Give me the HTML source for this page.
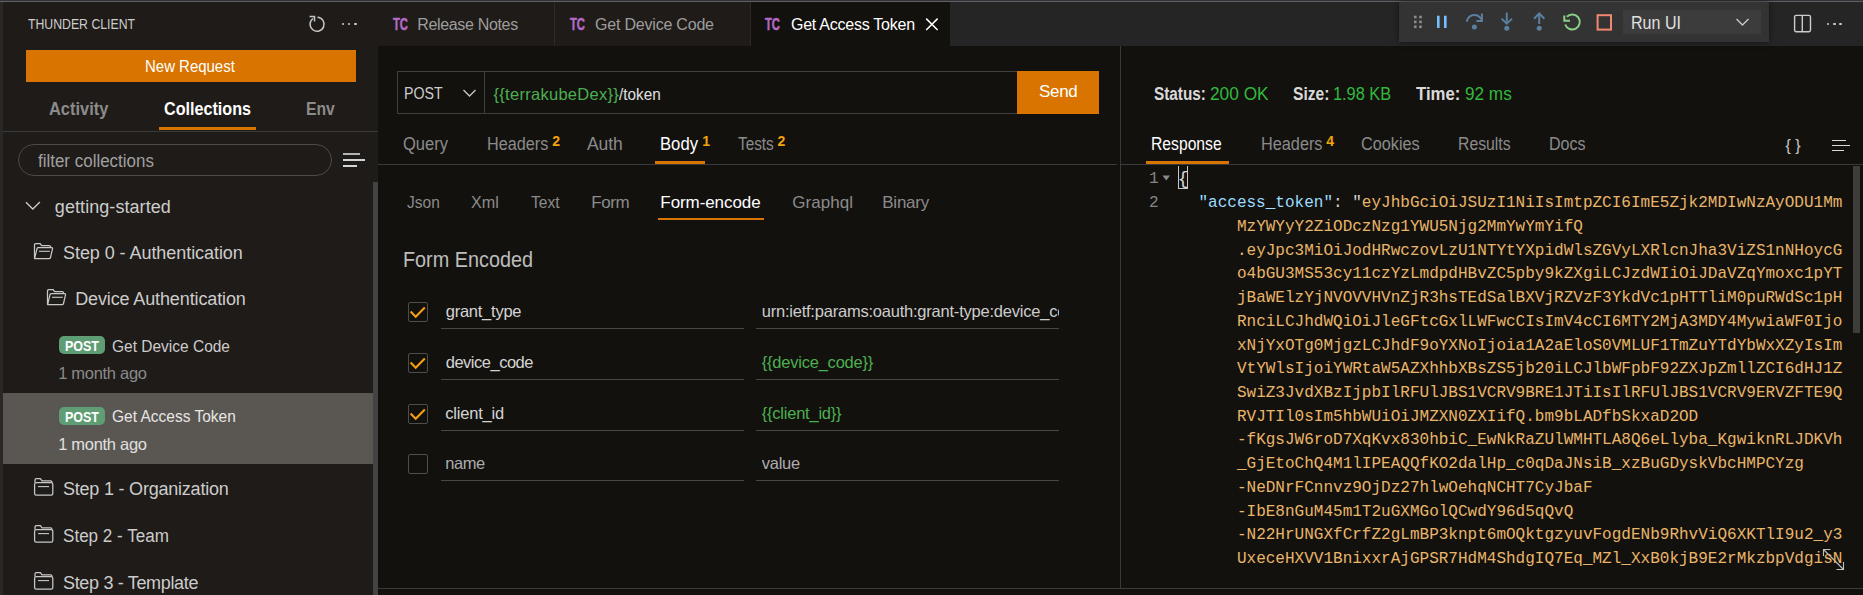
<!DOCTYPE html>
<html><head><meta charset="utf-8">
<style>
*{margin:0;padding:0;box-sizing:border-box}
html,body{width:1863px;height:595px;overflow:hidden;background:#13110e;font-family:"Liberation Sans",sans-serif}
.a{position:absolute;white-space:pre;line-height:1}
</style></head><body>
<div style="position:absolute;left:0px;top:0px;width:1863px;height:595px;background:#13110e;"></div>
<div style="position:absolute;left:0px;top:2px;width:378px;height:593px;background:#1f1b18;"></div>
<div style="position:absolute;left:0px;top:2px;width:3px;height:593px;background:#2a2727;"></div>
<div style="position:absolute;left:378px;top:2px;width:572px;height:44px;background:#1f1b18;"></div>
<div style="position:absolute;left:950px;top:2px;width:913px;height:44px;background:#252526;"></div>
<div style="position:absolute;left:751px;top:2px;width:199px;height:44px;background:#13110e;"></div>
<div style="position:absolute;left:554px;top:2px;width:1px;height:44px;background:#2d2a27;"></div>
<div style="position:absolute;left:750px;top:2px;width:1px;height:44px;background:#2d2a27;"></div>
<div style="position:absolute;left:0px;top:0px;width:1863px;height:1px;background:#303236;"></div>
<div style="position:absolute;left:0px;top:1px;width:1863px;height:1px;background:#606064;"></div>
<div style="position:absolute;left:26px;top:50px;width:330px;height:32px;background:#d97400;"></div>
<div style="position:absolute;left:159px;top:127px;width:97px;height:3px;background:#d97400;"></div>
<div style="position:absolute;left:3px;top:131px;width:375px;height:1px;background:#3a3a3a;"></div>
<div style="position:absolute;left:18px;top:144px;width:314px;height:32px;background:transparent;border:1px solid #4a4a4a;border-radius:16px;"></div>
<div style="position:absolute;left:343.3px;top:153.2px;width:17px;height:1.8px;background:#b4b4b4;"></div>
<div style="position:absolute;left:343.3px;top:159px;width:21.6px;height:1.8px;background:#d4d4d4;"></div>
<div style="position:absolute;left:343.3px;top:164.8px;width:14px;height:1.8px;background:#d4d4d4;"></div>
<div style="position:absolute;left:373px;top:182px;width:5px;height:413px;background:#434343;"></div>
<div style="position:absolute;left:59px;top:336px;width:46px;height:18px;background:#5f9e74;border-radius:5px;"></div>
<div style="position:absolute;left:3px;top:393px;width:370px;height:71px;background:#5a5651;"></div>
<div style="position:absolute;left:59px;top:407px;width:46px;height:18px;background:#5f9e74;border-radius:5px;"></div>
<div style="position:absolute;left:1399px;top:2px;width:370px;height:40px;background:#333333;box-shadow:0 0 6px rgba(0,0,0,.5);"></div>
<div style="position:absolute;left:1623px;top:10px;width:138px;height:24px;background:#3c3c3c;"></div>
<div style="position:absolute;left:1826.8px;top:22.7px;width:2.6px;height:2.6px;background:#cccccc;border-radius:50%;"></div>
<div style="position:absolute;left:1833.0px;top:22.7px;width:2.6px;height:2.6px;background:#cccccc;border-radius:50%;"></div>
<div style="position:absolute;left:1839.3px;top:22.7px;width:2.6px;height:2.6px;background:#cccccc;border-radius:50%;"></div>
<div style="position:absolute;left:341.8px;top:22.7px;width:2.6px;height:2.6px;background:#cccccc;border-radius:50%;"></div>
<div style="position:absolute;left:347.9px;top:22.7px;width:2.6px;height:2.6px;background:#cccccc;border-radius:50%;"></div>
<div style="position:absolute;left:354.2px;top:22.7px;width:2.6px;height:2.6px;background:#cccccc;border-radius:50%;"></div>
<div style="position:absolute;left:397px;top:71px;width:620px;height:43px;background:transparent;border:1px solid #3f3f3f;border-right:none;"></div>
<div style="position:absolute;left:484px;top:71px;width:1px;height:43px;background:#3f3f3f;"></div>
<div style="position:absolute;left:1017px;top:71px;width:82px;height:43px;background:#d97400;"></div>
<div style="position:absolute;left:1120px;top:46px;width:1px;height:542px;background:#3a3a3a;"></div>
<div style="position:absolute;left:655px;top:161px;width:50px;height:3px;background:#d97400;"></div>
<div style="position:absolute;left:378px;top:164px;width:739px;height:1px;background:#3a3a3a;"></div>
<div style="position:absolute;left:658px;top:218px;width:106px;height:1.5px;background:#d97400;"></div>
<div style="position:absolute;left:408px;top:302.0px;width:20px;height:20px;background:transparent;border:1px solid #4d4d4d;border-radius:2px;"></div>
<div style="position:absolute;left:441px;top:328px;width:303px;height:1px;background:#484848;"></div>
<div style="position:absolute;left:756px;top:328px;width:303px;height:1px;background:#484848;"></div>
<div style="position:absolute;left:408px;top:352.8px;width:20px;height:20px;background:transparent;border:1px solid #4d4d4d;border-radius:2px;"></div>
<div style="position:absolute;left:441px;top:379px;width:303px;height:1px;background:#484848;"></div>
<div style="position:absolute;left:756px;top:379px;width:303px;height:1px;background:#484848;"></div>
<div style="position:absolute;left:408px;top:403.6px;width:20px;height:20px;background:transparent;border:1px solid #4d4d4d;border-radius:2px;"></div>
<div style="position:absolute;left:441px;top:430px;width:303px;height:1px;background:#484848;"></div>
<div style="position:absolute;left:756px;top:430px;width:303px;height:1px;background:#484848;"></div>
<div style="position:absolute;left:408px;top:454.4px;width:20px;height:20px;background:transparent;border:1px solid #4d4d4d;border-radius:2px;"></div>
<div style="position:absolute;left:441px;top:480px;width:303px;height:1px;background:#484848;"></div>
<div style="position:absolute;left:756px;top:480px;width:303px;height:1px;background:#484848;"></div>
<div style="position:absolute;left:1146px;top:161px;width:83px;height:3px;background:#d97400;"></div>
<div style="position:absolute;left:1121px;top:164px;width:742px;height:1px;background:#3a3a3a;"></div>
<div style="position:absolute;left:1832px;top:139.8px;width:14.2px;height:1.2px;background:#d8d8d8;"></div>
<div style="position:absolute;left:1832px;top:145px;width:18.2px;height:1.2px;background:#d8d8d8;"></div>
<div style="position:absolute;left:1832px;top:150px;width:12px;height:1.2px;background:#d8d8d8;"></div>
<div style="position:absolute;left:1178px;top:166px;width:9.5px;height:23px;background:transparent;border:1px solid #c8c8c8;border-top:none;"></div>
<div style="position:absolute;left:1853px;top:166px;width:7px;height:167px;background:#3e3d3b;"></div>
<div style="position:absolute;left:378px;top:588px;width:1485px;height:1px;background:#3a3a3a;"></div>
<svg style="position:absolute;left:25px;top:200px" width="17" height="12"><path d="M1 2.3 L7.8 9 L14.9 2" stroke="#cccccc" stroke-width="1.3" fill="none"/></svg>
<svg style="position:absolute;left:28px;top:238px" width="30" height="26" viewBox="0 0 30 26"><g stroke="#c8c8c8" stroke-width="1.25" fill="none" stroke-linejoin="round"><path d="M6.5 20.5 V6.7 Q6.5 5.5 7.7 5.5 H12 L13.6 7.6 H21.3 Q22.5 7.6 22.5 8.8 V9.6"/><path d="M6.6 20.6 L9 10.6 Q9.3 9.6 10.3 9.6 H23.6 Q24.8 9.6 24.5 10.8 L22.5 19.5 Q22.2 20.7 21 20.7 Z"/><path d="M11 13.3 H21.8" stroke-width="1.1"/></g></svg>
<svg style="position:absolute;left:41px;top:284px" width="30" height="26" viewBox="0 0 30 26"><g stroke="#c8c8c8" stroke-width="1.25" fill="none" stroke-linejoin="round"><path d="M6.5 20.5 V6.7 Q6.5 5.5 7.7 5.5 H12 L13.6 7.6 H21.3 Q22.5 7.6 22.5 8.8 V9.6"/><path d="M6.6 20.6 L9 10.6 Q9.3 9.6 10.3 9.6 H23.6 Q24.8 9.6 24.5 10.8 L22.5 19.5 Q22.2 20.7 21 20.7 Z"/><path d="M11 13.3 H21.8" stroke-width="1.1"/></g></svg>
<svg style="position:absolute;left:28px;top:472px" width="30" height="28" viewBox="0 0 30 28"><g stroke="#c8c8c8" stroke-width="1.25" fill="none" stroke-linejoin="round"><path d="M7 10.5 V7.9 Q7 6.6 8.3 6.6 H12.4 L14 8.9 H22.6 Q23.9 8.9 24.1 10.5"/><rect x="6.6" y="10.6" width="18.2" height="12.4" rx="1.6"/><path d="M10 14.6 H21" stroke-width="1.1"/></g></svg>
<svg style="position:absolute;left:28px;top:519px" width="30" height="28" viewBox="0 0 30 28"><g stroke="#c8c8c8" stroke-width="1.25" fill="none" stroke-linejoin="round"><path d="M7 10.5 V7.9 Q7 6.6 8.3 6.6 H12.4 L14 8.9 H22.6 Q23.9 8.9 24.1 10.5"/><rect x="6.6" y="10.6" width="18.2" height="12.4" rx="1.6"/><path d="M10 14.6 H21" stroke-width="1.1"/></g></svg>
<svg style="position:absolute;left:28px;top:566px" width="30" height="28" viewBox="0 0 30 28"><g stroke="#c8c8c8" stroke-width="1.25" fill="none" stroke-linejoin="round"><path d="M7 10.5 V7.9 Q7 6.6 8.3 6.6 H12.4 L14 8.9 H22.6 Q23.9 8.9 24.1 10.5"/><rect x="6.6" y="10.6" width="18.2" height="12.4" rx="1.6"/><path d="M10 14.6 H21" stroke-width="1.1"/></g></svg>
<span class="a" style="left:392.50px;top:16.45px;font:700 16px 'Liberation Sans',sans-serif;color:#b46ac8;transform:scaleX(0.70);transform-origin:0 0;-webkit-text-stroke:0.5px #b46ac8">TC</span>
<span class="a" style="left:569.50px;top:16.45px;font:700 16px 'Liberation Sans',sans-serif;color:#b46ac8;transform:scaleX(0.70);transform-origin:0 0;-webkit-text-stroke:0.5px #b46ac8">TC</span>
<span class="a" style="left:764.50px;top:16.45px;font:700 16px 'Liberation Sans',sans-serif;color:#b46ac8;transform:scaleX(0.70);transform-origin:0 0;-webkit-text-stroke:0.5px #b46ac8">TC</span>
<svg style="position:absolute;left:925px;top:18px" width="15" height="14"><path d="M1.2 0.6 L12.6 12 M12.6 0.6 L1.2 12" stroke="#ffffff" stroke-width="1.5"/></svg>
<svg style="position:absolute;left:1410px;top:8px" width="40" height="28" viewBox="0 0 40 28">
<g fill="#8c8c8c"><rect x="4" y="7.7" width="2.6" height="2.6"/><rect x="9.2" y="7.7" width="2.6" height="2.6"/><rect x="4" y="12.6" width="2.6" height="2.6"/><rect x="9.2" y="12.6" width="2.6" height="2.6"/><rect x="4" y="17.5" width="2.6" height="2.6"/><rect x="9.2" y="17.5" width="2.6" height="2.6"/></g>
<g fill="#75beff"><rect x="27" y="7.7" width="2.6" height="12.3"/><rect x="34" y="7.7" width="2.6" height="12.3"/></g>
</svg>
<svg style="position:absolute;left:1460px;top:8px" width="160" height="28" viewBox="0 0 160 28">
<g stroke="#5b7fa0" stroke-width="2" fill="none"><path d="M6.6 13.6 Q8.6 6.9 14.3 6.9 Q19 6.9 21.6 11.6"/><path d="M21.9 5.6 V12.9 H16.4"/></g><circle cx="14.4" cy="19.1" r="2.5" fill="#5b7fa0"/>
<g stroke="#5b7fa0" stroke-width="2" fill="none"><path d="M46.8 4.6 V15.2"/><path d="M41.6 10.6 L46.8 15.6 L52 10.6"/></g><circle cx="46.8" cy="20.2" r="2.5" fill="#5b7fa0"/>
<g stroke="#5b7fa0" stroke-width="2" fill="none"><path d="M79.2 5.6 V16"/><path d="M74 10.7 L79.2 5.5 L84.4 10.7"/></g><circle cx="79.2" cy="20.2" r="2.5" fill="#5b7fa0"/>
<g stroke="#89d185" stroke-width="2" fill="none"><path d="M106.9 8.7 A7.5 7.5 0 1 1 105.2 16.5"/><path d="M104.3 7.4 V12.7 H110"/></g>
<rect x="137.6" y="7.2" width="13.4" height="14.4" stroke="#f48771" stroke-width="2" fill="none"/>
</svg>
<svg style="position:absolute;left:1735px;top:17px" width="16" height="11"><path d="M1.5 2 L7.5 8 L13.5 2" stroke="#c8c8c8" stroke-width="1.4" fill="none"/></svg>
<svg style="position:absolute;left:1793px;top:14px" width="19" height="19"><rect x="1.6" y="1.4" width="15.9" height="16.3" rx="1.6" stroke="#cccccc" stroke-width="1.4" fill="none"/><path d="M9.3 1.5 V17.5" stroke="#cccccc" stroke-width="1.4"/></svg>
<svg style="position:absolute;left:307px;top:14px" width="20" height="20" viewBox="0 0 20 20"><path d="M6 4.5 A7 7 0 1 0 10.5 3.2" stroke="#c5c5c5" stroke-width="1.5" fill="none"/><path d="M2.5 2.5 H7.5 V7.5" stroke="#c5c5c5" stroke-width="1.5" fill="none"/></svg>
<svg style="position:absolute;left:462px;top:88px" width="16" height="11"><path d="M1.5 2 L7.5 8 L13.5 2" stroke="#c8c8c8" stroke-width="1.3" fill="none"/></svg>
<svg style="position:absolute;left:408px;top:302.0px" width="20" height="20"><path d="M2.6 9.6 L7.7 14.7 L16.8 5.6" stroke="#f5a00e" stroke-width="2.1" fill="none"/></svg>
<div style="position:absolute;left:761.7px;top:298.03px;width:297px;height:30px;overflow:hidden"><span class="a" style="left:0;top:4px;font:16.5px 'Liberation Sans',sans-serif;color:#cccccc;letter-spacing:-0.22px">urn:ietf:params:oauth:grant-type:device_code</span></div>
<svg style="position:absolute;left:408px;top:352.8px" width="20" height="20"><path d="M2.6 9.6 L7.7 14.7 L16.8 5.6" stroke="#f5a00e" stroke-width="2.1" fill="none"/></svg>
<div style="position:absolute;left:761.7px;top:348.83px;width:297px;height:30px;overflow:hidden"><span class="a" style="left:0;top:4px;font:16.5px 'Liberation Sans',sans-serif;color:#4caf50;letter-spacing:-0.22px">{{device_code}}</span></div>
<svg style="position:absolute;left:408px;top:403.6px" width="20" height="20"><path d="M2.6 9.6 L7.7 14.7 L16.8 5.6" stroke="#f5a00e" stroke-width="2.1" fill="none"/></svg>
<div style="position:absolute;left:761.7px;top:399.63px;width:297px;height:30px;overflow:hidden"><span class="a" style="left:0;top:4px;font:16.5px 'Liberation Sans',sans-serif;color:#4caf50;letter-spacing:-0.22px">{{client_id}}</span></div>
<div style="position:absolute;left:761.7px;top:450.43px;width:297px;height:30px;overflow:hidden"><span class="a" style="left:0;top:4px;font:16.5px 'Liberation Sans',sans-serif;color:#acacac;letter-spacing:-0.22px">value</span></div>
<svg style="position:absolute;left:1820px;top:546px" width="28" height="28"><g stroke="#c0c0c0" stroke-width="1.1" fill="none"><path d="M3.5 3.5 L23.5 23.5"/><path d="M3.5 10 V3.5 H10.5"/><path d="M16.5 23.5 H23.5 V16"/></g></svg>
<svg style="position:absolute;left:1162px;top:175px" width="9" height="7"><path d="M0.5 0.5 H8 L4.25 5.5 Z" fill="#8a8a8a"/></svg>
<span class="a" style="left:1198.44px;top:194.15px;font:16.033px 'Liberation Mono',monospace;color:#e8b56a"><span style="color:#9cdcfe">"access_token"</span><span style="color:#d4d4d4">: "</span>eyJhbGciOiJSUzI1NiIsImtpZCI6ImE5Zjk2MDIwNzAyODU1Mm</span>
<span class="a" style="left:1236.92px;top:217.88px;font:16.033px 'Liberation Mono',monospace;color:#e8b56a">MzYWYyY2ZiODczNzg1YWU5Njg2MmYwYmYifQ</span>
<span class="a" style="left:1236.92px;top:241.61px;font:16.033px 'Liberation Mono',monospace;color:#e8b56a">.eyJpc3MiOiJodHRwczovLzU1NTYtYXpidWlsZGVyLXRlcnJha3ViZS1nNHoycG</span>
<span class="a" style="left:1236.92px;top:265.34px;font:16.033px 'Liberation Mono',monospace;color:#e8b56a">o4bGU3MS53cy11czYzLmdpdHBvZC5pby9kZXgiLCJzdWIiOiJDaVZqYmoxc1pYT</span>
<span class="a" style="left:1236.92px;top:289.07px;font:16.033px 'Liberation Mono',monospace;color:#e8b56a">jBaWElzYjNVOVVHVnZjR3hsTEdSalBXVjRZVzF3YkdVc1pHTTliM0puRWdSc1pH</span>
<span class="a" style="left:1236.92px;top:312.80px;font:16.033px 'Liberation Mono',monospace;color:#e8b56a">RnciLCJhdWQiOiJleGFtcGxlLWFwcCIsImV4cCI6MTY2MjA3MDY4MywiaWF0Ijo</span>
<span class="a" style="left:1236.92px;top:336.53px;font:16.033px 'Liberation Mono',monospace;color:#e8b56a">xNjYxOTg0MjgzLCJhdF9oYXNoIjoia1A2aEloS0VMLUF1TmZuYTdYbWxXZyIsIm</span>
<span class="a" style="left:1236.92px;top:360.26px;font:16.033px 'Liberation Mono',monospace;color:#e8b56a">VtYWlsIjoiYWRtaW5AZXhhbXBsZS5jb20iLCJlbWFpbF92ZXJpZmllZCI6dHJ1Z</span>
<span class="a" style="left:1236.92px;top:383.99px;font:16.033px 'Liberation Mono',monospace;color:#e8b56a">SwiZ3JvdXBzIjpbIlRFUlJBS1VCRV9BRE1JTiIsIlRFUlJBS1VCRV9ERVZFTE9Q</span>
<span class="a" style="left:1236.92px;top:407.72px;font:16.033px 'Liberation Mono',monospace;color:#e8b56a">RVJTIl0sIm5hbWUiOiJMZXN0ZXIifQ.bm9bLADfbSkxaD2OD</span>
<span class="a" style="left:1236.92px;top:431.45px;font:16.033px 'Liberation Mono',monospace;color:#e8b56a">-fKgsJW6roD7XqKvx830hbiC_EwNkRaZUlWMHTLA8Q6eLlyba_KgwiknRLJDKVh</span>
<span class="a" style="left:1236.92px;top:455.18px;font:16.033px 'Liberation Mono',monospace;color:#e8b56a">_GjEtoChQ4M1lIPEAQQfKO2dalHp_c0qDaJNsiB_xzBuGDyskVbcHMPCYzg</span>
<span class="a" style="left:1236.92px;top:478.91px;font:16.033px 'Liberation Mono',monospace;color:#e8b56a">-NeDNrFCnnvz9OjDz27hlwOehqNCHT7CyJbaF</span>
<span class="a" style="left:1236.92px;top:502.64px;font:16.033px 'Liberation Mono',monospace;color:#e8b56a">-IbE8nGuM45m1T2uGXMGolQCwdY96d5qQvQ</span>
<span class="a" style="left:1236.92px;top:526.37px;font:16.033px 'Liberation Mono',monospace;color:#e8b56a">-N22HrUNGXfCrfZ2gLmBP3knpt6mOQktgzyuvFogdENb9RhvViQ6XKTlI9u2_y3</span>
<span class="a" style="left:1236.92px;top:550.10px;font:16.033px 'Liberation Mono',monospace;color:#e8b56a">UxeceHXVV1BnixxrAjGPSR7HdM4ShdgIQ7Eq_MZl_XxB0kjB9E2rMkzbpVdgisN</span>
<span class="a" style="left:28.28px;top:15.72px;font:400 14.5px 'Liberation Sans',sans-serif;color:#cccccc;letter-spacing:0.000px;transform:scaleX(0.8461);transform-origin:0 0;">THUNDER CLIENT</span>
<span class="a" style="left:145.28px;top:56.58px;font:400 16.2px 'Liberation Sans',sans-serif;color:#ffffff;letter-spacing:0.000px;transform:scaleX(0.9244);transform-origin:0 0;">New Request</span>
<span class="a" style="left:48.86px;top:98.34px;font:700 18.5px 'Liberation Sans',sans-serif;color:#8b8b8b;letter-spacing:0.000px;transform:scaleX(0.8882);transform-origin:0 0;">Activity</span>
<span class="a" style="left:164.0px;top:98.34px;font:700 18.5px 'Liberation Sans',sans-serif;color:#ffffff;letter-spacing:0.000px;transform:scaleX(0.8725);transform-origin:0 0;">Collections</span>
<span class="a" style="left:306.2px;top:98.34px;font:700 18.5px 'Liberation Sans',sans-serif;color:#8b8b8b;letter-spacing:0.000px;transform:scaleX(0.8486);transform-origin:0 0;">Env</span>
<span class="a" style="left:38.0px;top:150.76px;font:400 18px 'Liberation Sans',sans-serif;color:#a0a0a0;letter-spacing:0.000px;transform:scaleX(0.9416);transform-origin:0 0;">filter collections</span>
<span class="a" style="left:54.86px;top:197.46px;font:400 18px 'Liberation Sans',sans-serif;color:#cccccc;letter-spacing:0.062px;">getting-started</span>
<span class="a" style="left:63.0px;top:242.76px;font:400 18px 'Liberation Sans',sans-serif;color:#cccccc;letter-spacing:-0.060px;">Step 0 - Authentication</span>
<span class="a" style="left:75.2px;top:288.76px;font:400 18px 'Liberation Sans',sans-serif;color:#cccccc;letter-spacing:-0.125px;">Device Authentication</span>
<span class="a" style="left:64.88px;top:337.85px;font:700 14px 'Liberation Sans',sans-serif;color:#ffffff;letter-spacing:0.000px;transform:scaleX(0.8918);transform-origin:0 0;">POST</span>
<span class="a" style="left:112.0px;top:336.53px;font:400 16.5px 'Liberation Sans',sans-serif;color:#cccccc;letter-spacing:0.000px;transform:scaleX(0.9391);transform-origin:0 0;">Get Device Code</span>
<span class="a" style="left:58.2px;top:364.03px;font:400 16.5px 'Liberation Sans',sans-serif;color:#8a8a8a;letter-spacing:-0.293px;">1 month ago</span>
<span class="a" style="left:64.88px;top:408.85px;font:700 14px 'Liberation Sans',sans-serif;color:#ffffff;letter-spacing:0.000px;transform:scaleX(0.8918);transform-origin:0 0;">POST</span>
<span class="a" style="left:111.84px;top:407.03px;font:400 16.5px 'Liberation Sans',sans-serif;color:#e6e6e6;letter-spacing:0.000px;transform:scaleX(0.9394);transform-origin:0 0;">Get Access Token</span>
<span class="a" style="left:58.2px;top:435.03px;font:400 16.5px 'Liberation Sans',sans-serif;color:#e0e0e0;letter-spacing:-0.293px;">1 month ago</span>
<span class="a" style="left:63.0px;top:479.26px;font:400 18px 'Liberation Sans',sans-serif;color:#cccccc;letter-spacing:-0.215px;">Step 1 - Organization</span>
<span class="a" style="left:63.0px;top:525.76px;font:400 18px 'Liberation Sans',sans-serif;color:#cccccc;letter-spacing:0.000px;transform:scaleX(0.9483);transform-origin:0 0;">Step 2 - Team</span>
<span class="a" style="left:63.0px;top:572.76px;font:400 18px 'Liberation Sans',sans-serif;color:#cccccc;letter-spacing:-0.329px;">Step 3 - Template</span>
<span class="a" style="left:417.2px;top:16.45px;font:400 16px 'Liberation Sans',sans-serif;color:#9d9d9d;letter-spacing:-0.333px;">Release Notes</span>
<span class="a" style="left:595.06px;top:16.45px;font:400 16px 'Liberation Sans',sans-serif;color:#9d9d9d;letter-spacing:-0.207px;">Get Device Code</span>
<span class="a" style="left:791.0px;top:16.45px;font:400 16px 'Liberation Sans',sans-serif;color:#ffffff;letter-spacing:-0.247px;">Get Access Token</span>
<span class="a" style="left:1631.12px;top:13.38px;font:400 17.5px 'Liberation Sans',sans-serif;color:#e0e0e0;letter-spacing:0.000px;transform:scaleX(0.9172);transform-origin:0 0;">Run UI</span>
<span class="a" style="left:404.46px;top:85.25px;font:400 16px 'Liberation Sans',sans-serif;color:#cccccc;letter-spacing:0.000px;transform:scaleX(0.8879);transform-origin:0 0;">POST</span>
<span class="a" style="left:493.5px;top:84.53px;font:400 16.5px 'Liberation Sans',sans-serif;color:#4caf50;letter-spacing:0.280px;">{{terrakubeDex}}</span>
<span class="a" style="left:619.3px;top:84.53px;font:400 16.5px 'Liberation Sans',sans-serif;color:#e0e0e0;letter-spacing:0.000px;transform:scaleX(0.9276);transform-origin:0 0;">/token</span>
<span class="a" style="left:1039.0px;top:81.61px;font:400 17px 'Liberation Sans',sans-serif;color:#ffffff;letter-spacing:-0.301px;">Send</span>
<span class="a" style="left:403.0px;top:134.08px;font:400 17.5px 'Liberation Sans',sans-serif;color:#8b8b8b;letter-spacing:0.000px;transform:scaleX(0.9443);transform-origin:0 0;">Query</span>
<span class="a" style="left:486.7px;top:134.08px;font:400 17.5px 'Liberation Sans',sans-serif;color:#8b8b8b;letter-spacing:0.000px;transform:scaleX(0.9266);transform-origin:0 0;">Headers</span>
<span class="a" style="left:552.2px;top:133.45px;font:700 14px 'Liberation Sans',sans-serif;color:#f0a30a;letter-spacing:0.000px;">2</span>
<span class="a" style="left:587.0px;top:134.08px;font:400 17.5px 'Liberation Sans',sans-serif;color:#8b8b8b;letter-spacing:-0.067px;">Auth</span>
<span class="a" style="left:660.2px;top:134.08px;font:400 17.5px 'Liberation Sans',sans-serif;color:#ffffff;letter-spacing:0.000px;transform:scaleX(0.9526);transform-origin:0 0;">Body</span>
<span class="a" style="left:702.2px;top:133.45px;font:700 14px 'Liberation Sans',sans-serif;color:#f0a30a;letter-spacing:0.000px;">1</span>
<span class="a" style="left:738.0px;top:134.08px;font:400 17.5px 'Liberation Sans',sans-serif;color:#8b8b8b;letter-spacing:0.000px;transform:scaleX(0.8742);transform-origin:0 0;">Tests</span>
<span class="a" style="left:777.4px;top:133.45px;font:700 14px 'Liberation Sans',sans-serif;color:#f0a30a;letter-spacing:0.000px;">2</span>
<span class="a" style="left:407.0px;top:192.61px;font:400 17px 'Liberation Sans',sans-serif;color:#8b8b8b;letter-spacing:0.000px;transform:scaleX(0.9131);transform-origin:0 0;">Json</span>
<span class="a" style="left:471.0px;top:192.61px;font:400 17px 'Liberation Sans',sans-serif;color:#8b8b8b;letter-spacing:0.000px;transform:scaleX(0.9494);transform-origin:0 0;">Xml</span>
<span class="a" style="left:530.84px;top:192.61px;font:400 17px 'Liberation Sans',sans-serif;color:#8b8b8b;letter-spacing:0.000px;transform:scaleX(0.9190);transform-origin:0 0;">Text</span>
<span class="a" style="left:591.2px;top:192.61px;font:400 17px 'Liberation Sans',sans-serif;color:#8b8b8b;letter-spacing:-0.384px;">Form</span>
<span class="a" style="left:792.16px;top:192.61px;font:400 17px 'Liberation Sans',sans-serif;color:#8b8b8b;letter-spacing:0.073px;">Graphql</span>
<span class="a" style="left:882.2px;top:192.61px;font:400 17px 'Liberation Sans',sans-serif;color:#8b8b8b;letter-spacing:-0.214px;">Binary</span>
<span class="a" style="left:660.34px;top:192.61px;font:400 17px 'Liberation Sans',sans-serif;color:#ffffff;letter-spacing:-0.081px;">Form-encode</span>
<span class="a" style="left:402.84px;top:247.80px;font:400 21.5px 'Liberation Sans',sans-serif;color:#bdbdbd;letter-spacing:0.000px;transform:scaleX(0.9216);transform-origin:0 0;">Form Encoded</span>
<span class="a" style="left:445.76px;top:302.03px;font:400 16.5px 'Liberation Sans',sans-serif;color:#d4d4d4;letter-spacing:-0.249px;">grant_type</span>
<span class="a" style="left:445.76px;top:352.83px;font:400 16.5px 'Liberation Sans',sans-serif;color:#d4d4d4;letter-spacing:-0.496px;">device_code</span>
<span class="a" style="left:445.28px;top:403.63px;font:400 16.5px 'Liberation Sans',sans-serif;color:#d4d4d4;letter-spacing:-0.200px;">client_id</span>
<span class="a" style="left:445.28px;top:454.43px;font:400 16.5px 'Liberation Sans',sans-serif;color:#acacac;letter-spacing:-0.427px;">name</span>
<span class="a" style="left:1153.5px;top:83.76px;font:700 18px 'Liberation Sans',sans-serif;color:#d9d9d9;letter-spacing:0.000px;transform:scaleX(0.8513);transform-origin:0 0;">Status:</span>
<span class="a" style="left:1210.2px;top:83.76px;font:400 18px 'Liberation Sans',sans-serif;color:#32b93d;letter-spacing:0.000px;transform:scaleX(0.9609);transform-origin:0 0;">200 OK</span>
<span class="a" style="left:1293.42px;top:83.76px;font:700 18px 'Liberation Sans',sans-serif;color:#d9d9d9;letter-spacing:0.000px;transform:scaleX(0.8659);transform-origin:0 0;">Size:</span>
<span class="a" style="left:1333.2px;top:83.76px;font:400 18px 'Liberation Sans',sans-serif;color:#32b93d;letter-spacing:0.000px;transform:scaleX(0.9071);transform-origin:0 0;">1.98 KB</span>
<span class="a" style="left:1415.64px;top:83.76px;font:700 18px 'Liberation Sans',sans-serif;color:#d9d9d9;letter-spacing:0.000px;transform:scaleX(0.9306);transform-origin:0 0;">Time:</span>
<span class="a" style="left:1464.86px;top:83.76px;font:400 18px 'Liberation Sans',sans-serif;color:#32b93d;letter-spacing:0.000px;transform:scaleX(0.9529);transform-origin:0 0;">92 ms</span>
<span class="a" style="left:1151.26px;top:134.48px;font:400 17.5px 'Liberation Sans',sans-serif;color:#ffffff;letter-spacing:0.000px;transform:scaleX(0.8966);transform-origin:0 0;">Response</span>
<span class="a" style="left:1261.2px;top:134.48px;font:400 17.5px 'Liberation Sans',sans-serif;color:#8b8b8b;letter-spacing:0.000px;transform:scaleX(0.9299);transform-origin:0 0;">Headers</span>
<span class="a" style="left:1326.3px;top:133.45px;font:700 14px 'Liberation Sans',sans-serif;color:#f0a30a;letter-spacing:0.000px;">4</span>
<span class="a" style="left:1361.28px;top:134.48px;font:400 17.5px 'Liberation Sans',sans-serif;color:#8b8b8b;letter-spacing:0.000px;transform:scaleX(0.9286);transform-origin:0 0;">Cookies</span>
<span class="a" style="left:1458.36px;top:134.48px;font:400 17.5px 'Liberation Sans',sans-serif;color:#8b8b8b;letter-spacing:0.000px;transform:scaleX(0.9020);transform-origin:0 0;">Results</span>
<span class="a" style="left:1549.36px;top:134.48px;font:400 17.5px 'Liberation Sans',sans-serif;color:#8b8b8b;letter-spacing:0.000px;transform:scaleX(0.9189);transform-origin:0 0;">Docs</span>
<span class="a" style="left:1785.5px;top:137.45px;font:400 16px 'Liberation Sans',sans-serif;color:#c5c5c5;letter-spacing:-0.070px;">{ }</span>
<span class="a" style="left:1149px;top:170.44px;font:400 16px 'Liberation Mono',monospace;color:#858585;letter-spacing:0.000px;">1</span>
<span class="a" style="left:1149px;top:194.17px;font:400 16px 'Liberation Mono',monospace;color:#858585;letter-spacing:0.000px;">2</span>
<span class="a" style="left:1177.5px;top:168.44px;font:400 19px 'Liberation Mono',monospace;color:#d4d4d4;letter-spacing:0.000px;">{</span>
</body></html>
